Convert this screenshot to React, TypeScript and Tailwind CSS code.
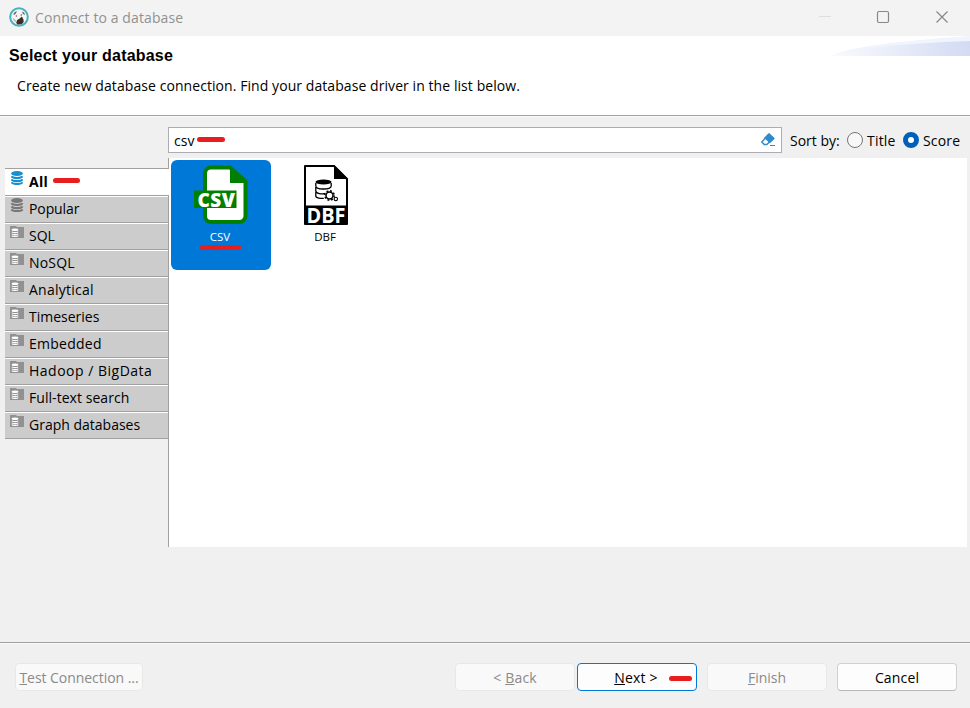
import type { ReactNode } from 'react';

const font = "font-['Open_Sans','Noto_Sans',sans-serif]";

function Disks({ color, className }: { color: string; className: string }) {
  return (
    <svg viewBox="0 0 12 14" className={className} fill="none" stroke={color}>
      <ellipse cx="6" cy="2.5" rx="5.8" ry="2.5" fill={color} stroke="none" />
      <path d="M0.6 5.2c.8 2.4 10 2.4 10.8 0M0.6 8.3c.8 2.4 10 2.4 10.8 0M0.6 11.3c.8 2.3 10 2.3 10.8 0" strokeWidth="2.1" />
    </svg>
  );
}

function FolderIcon() {
  return (
    <svg viewBox="0 0 14 12" className="h-3 w-3.5">
      <path d="M0 0h6l1 1h7v11H0z" fill="#919191" />
      <ellipse cx="5" cy="3.8" rx="3.4" ry="1.3" fill="#fff" />
      <path d="M1.8 5.7c.6 1.1 5.8 1.1 6.4 0M1.8 7.7c.6 1.1 5.8 1.1 6.4 0M1.8 9.6c.6 1.1 5.8 1.1 6.4 0" fill="none" stroke="#fff" strokeWidth="1.2" />
    </svg>
  );
}

function Logo() {
  return (
    <svg viewBox="0 0 20 20" className="mb-0.5 size-5">
      <circle cx="10" cy="10" r="8.8" fill="#f4f6f6" stroke="#45b3bd" strokeWidth="2" />
      <path d="M4.3 7.5c.7-2 2.2-3 3.5-3.3l-.6 1.8-1.6 1.8zM13 4.5c1.6.3 2.8 1.8 3 3.4l-2-1z" fill="#6b5a56" />
      <path d="M8.2 13l2.5-1.4 2.2-2 1.5 2.6.3 2.8-2 2.2-4.5.2-1-2z" fill="#3e2c28" />
      <circle cx="7.4" cy="9" r=".8" fill="#6b5a56" />
      <circle cx="12.3" cy="8" r=".7" fill="#59443e" />
      <path d="M3.8 10.5c0 2.5 1 3.8 2.6 5l.8-2-1.6-1.6z" fill="#c4bfbd" />
    </svg>
  );
}

function CsvIcon() {
  return (
    <svg viewBox="0 0 54 60" className="-ml-px h-[60px] w-[54px]">
      <path d="M17 2.5h19l15.5 14V51a6 6 0 0 1-6 6H17a6 6 0 0 1-6-6V8.5a6 6 0 0 1 6-6z" fill="#fff" stroke="#008000" strokeWidth="4" />
      <path d="M36 1l16 16v1H36z" fill="#008000" />
      <path d="M0 25.5h42.500v17.500H0z" fill="#008000" />
      <text x="3.500" y="41.500" textLength="37.500" lengthAdjust="spacing" fill="#fff" fontFamily="Open Sans" fontWeight="800" fontSize="19">CSV</text>
    </svg>
  );
}

function DbfIcon() {
  return (
    <svg viewBox="0 0 44 60" overflow="visible" className="-ml-px h-[60px] w-11">
      <path d="M1 1h29l13 13v45H1z" fill="#fff" stroke="#000" strokeWidth="2" strokeLinejoin="round" />
      <path d="M30 0l14 14H30z" />
      <path d="M0 40.5h44v17.500l-2 2H2l-2-2z" />
      <ellipse cx="19.5" cy="17" rx="8" ry="2.6" />
      <path d="M11.8 18v3c0 4 15.4 4 15.4 0v-3M11.8 22v4c0 2.5 6 3.5 10 2.5M11.8 27v4c0 2 5 2.8 8 2.3" fill="none" stroke="#000" strokeWidth="1.3" />
      <circle cx="25.5" cy="30.5" r="4.7" fill="#fff" stroke="#000" strokeWidth="1.5" strokeDasharray="1.9 1.79" />
      <circle cx="25.5" cy="30.5" r="3.5" fill="#fff" stroke="#000" strokeWidth="1.5" />
      <circle cx="31.8" cy="34" r="1.7" fill="#fff" stroke="#000" strokeWidth="1.1" />
      <text x="2.5" y="57.500" textLength="39" lengthAdjust="spacingAndGlyphs" fill="#fff" fontFamily="Open Sans" fontWeight="700" fontSize="20.5">DBF</text>
    </svg>
  );
}

const tabs = [
  { label: 'Popular', spacing: 'tracking-[-0.1px]' },
  { label: 'SQL', spacing: 'tracking-[0px]' },
  { label: 'NoSQL', spacing: 'tracking-[0.2px]' },
  { label: 'Analytical', spacing: 'tracking-[0.25px]' },
  { label: 'Timeseries', spacing: 'tracking-[0px]' },
  { label: 'Embedded', spacing: 'tracking-[0.25px]' },
  { label: 'Hadoop / BigData', spacing: 'tracking-[0.5px]' },
  { label: 'Full-text search', spacing: 'tracking-[0.05px]' },
  { label: 'Graph databases', spacing: 'tracking-[0px]' },
];

function Mark({ className }: { className: string }) {
  return <span className={`h-[5px] shrink-0 rounded-full bg-[#e81e1e] ${className}`} />;
}

function Button({ children, className }: { children: ReactNode; className: string }) {
  return <button className={`flex h-7 items-center justify-center whitespace-nowrap rounded border pt-px ${className}`}>{children}</button>;
}

const disabled = 'border-[#e8e8e8] bg-[#f9f9f9] text-[#8a8a8a]';

export default function App() {
  return (
    <div className={`flex h-[708px] w-[970px] flex-col overflow-hidden bg-[#f0f0f0] text-[14px] leading-5 text-black ${font}`}>
      <div className="flex h-9 shrink-0 items-center bg-[#f3f3f3] pl-[9px] text-[#919191]">
        <Logo />
        <span className="ml-[6px] tracking-[0.1px]">Connect to a database</span>
        <svg viewBox="0 0 130 14" className="mb-0.5 ml-auto mr-[21px] h-3.5 w-[130px]" fill="none" stroke="#878787">
          <path d="M0 6.5h12" stroke="#dedede" />
          <rect x="58.5" y="1.5" width="11" height="11" rx="1.5" strokeWidth="1.2" />
          <path d="M117.5 1.5l11 11m0-11l-11 11" strokeWidth="1.2" />
        </svg>
      </div>
      <div className="flex h-20 shrink-0 justify-between border-b border-[#a0a0a0] bg-white">
        <div className="flex flex-col pl-[9px] pt-2.5">
          <h1 className="font-['Liberation_Sans',sans-serif] text-base/5 font-bold tracking-[0.2px]">Select your database</h1>
          <p className="ml-2 mt-2.5 tracking-[0.07px]">Create new database connection. Find your database driver in the list below.</p>
        </div>
        <svg viewBox="0 0 138 20" className="h-5 w-[138px]">
          <defs>
            <linearGradient id="sweep"><stop offset="0" stopColor="#fafbfe" /><stop offset="1" stopColor="#d3dbf3" /></linearGradient>
          </defs>
          <path d="M0 20Q20 8 138 0V20z" fill="#f0f4fd" />
          <path d="M0 20Q30 9 138 5V20z" fill="url(#sweep)" />
        </svg>
      </div>
      <div className="h-px shrink-0 bg-[#fafafa]" />
      <div className="flex h-[41px] shrink-0 pl-[168px] pt-[10px]">
        <div className="flex h-[26px] w-[614px] items-center border border-[#abadb3] bg-white pl-[5px] pr-[5px]">
          <span className="pt-0.5">csv</span>
          <Mark className="mb-px ml-[3px] w-7" />
          <svg viewBox="0 0 16 16" className="ml-auto size-4">
            <path d="M8.8 2.2l4.7 4.1-6.7 6.2H4.2L1.8 10z" fill="#fff" stroke="#2f8bcb" strokeWidth="1.5" strokeLinejoin="round" />
            <path d="M9 1.5l5.3 5-4.4 4.2L4.6 6z" fill="#2f8bcb" stroke="#2f8bcb" strokeLinejoin="round" />
            <path d="M10 13.5h5" stroke="#2f8bcb" />
          </svg>
        </div>
        <div className="ml-2 flex h-[26px] items-center">
          <span className="w-[57px] whitespace-nowrap pt-0.5">Sort by:</span>
          <span className="size-4 rounded-full border border-[#767676] bg-[#f8f8f8]" />
          <span className="ml-1 w-9 pt-0.5 tracking-[0.2px]">Title</span>
          <span className="size-4 rounded-full border-[5px] border-[#005fb8] bg-white" />
          <span className="ml-1 pt-0.5 tracking-[0.15px]">Score</span>
        </div>
      </div>
      <div className="flex h-[389px] shrink-0 pl-[5px]">
        <nav className="flex w-[164px] flex-col">
          <div className="h-[10px] border-r border-[#a0a0a0]" />
          <div className="flex h-[27px] border-t border-[#a0a0a0] bg-white pl-[6px]">
            <Disks color="#168fd0" className="mt-[2px] h-3.5 w-3" />
            <span className="ml-[6px] mt-[3px] font-['Open_Sans'] font-bold tracking-[0.3px]">All</span>
            <Mark className="ml-[5px] mt-[9px] w-[27px]" />
          </div>
          {tabs.map((tab, i) => (
            <div key={tab.label} className="flex h-[27px] border-r border-t border-[#a0a0a0] bg-[#ccc] pl-[5px] shadow-[inset_0_1px_#fff]">
              <span className="w-[19px] pt-[2px]">
                {i === 0 ? <Disks color="#777" className="h-3.5 w-3.5" /> : <span className="block pt-px"><FolderIcon /></span>}
              </span>
              <span className={`mt-[3px] whitespace-nowrap ${tab.spacing}`}>{tab.label}</span>
            </div>
          ))}
          <div className="flex-1 border-r border-t border-[#a0a0a0]" />
        </nav>
        <main className="flex w-[798px] bg-white pl-0.5 pt-0.5 text-[11.5px] leading-4">
          <div className="flex h-[110px] w-[100px] flex-col items-center rounded-md bg-[#0078d7] pt-[5px] text-white">
            <CsvIcon />
            <span className="mr-0.5 mt-1">CSV</span>
            <Mark className="mr-0.5 w-[41px]" />
          </div>
          <div className="ml-[5px] flex h-[110px] w-[100px] flex-col items-center pt-[5px]">
            <DbfIcon />
            <span className="mr-0.5 mt-1">DBF</span>
          </div>
        </main>
      </div>
      <div className="mt-[95px] h-0.5 shrink-0 border-b border-t border-b-[#fafafa] border-t-[#a0a0a0]" />
      <footer className="flex pl-[15px] pt-[19px]">
        <Button className={`w-32 ${disabled}`}><span className="tracking-[-0.05px]"><u>T</u>est Connection ...</span></Button>
        <Button className={`ml-[312px] w-[120px] ${disabled}`}><span className="tracking-[0.2px]">&lt; <u>B</u>ack</span></Button>
        <Button className="ml-0.5 w-[120px] border-[#0078d4] bg-[#fdfdfd]"><span className="ml-8 tracking-[0.2px]"><u>N</u>ext &gt;</span><Mark className="ml-[11px] mt-0.5 w-[23px]" /></Button>
        <Button className={`ml-[10px] w-[120px] ${disabled}`}><span><u>F</u>inish</span></Button>
        <Button className="ml-[10px] w-[120px] border-[#d0d0d0] border-b-[#b8b8b8] bg-[#fdfdfd]"><span className="tracking-[0.15px]">Cancel</span></Button>
      </footer>
    </div>
  );
}
